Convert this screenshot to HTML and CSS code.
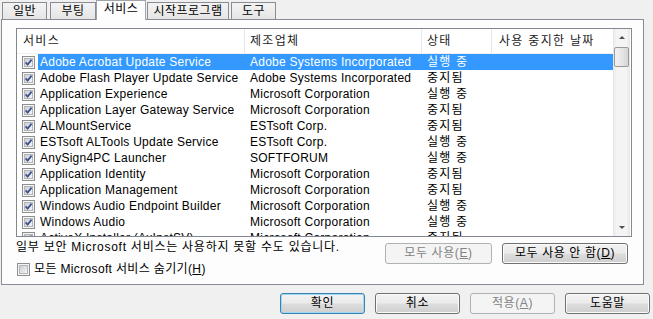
FILE: index.html
```html
<!DOCTYPE html>
<html lang="ko">
<head>
    <meta charset="UTF-8">
    <title>시스템 구성</title>
    <link rel="stylesheet" href="styles.css">
</head>
<body>
    <div class="tabs">
        <div class="tab t1">일반</div>
        <div class="tab t2">부팅</div>
        <div class="tab active">서비스</div>
        <div class="tab t4">시작프로그램</div>
        <div class="tab t5">도구</div>
    </div>

    <div class="panel">
        <div class="list">
            <div class="table">
                <div class="head">
                    <div class="hc c-name">서비스</div>
                    <div class="hc c-maker">제조업체</div>
                    <div class="hc c-state">상태</div>
                    <div class="hc c-date">사용 중지한 날짜</div>
                </div>
                <div class="row selected"><span class="cb on"></span><span class="cell name">Adobe Acrobat Update Service</span><span class="cell">Adobe Systems Incorporated</span><span class="cell state">실행 중</span><span class="cell"></span></div>
                <div class="row"><span class="cb on"></span><span class="cell name">Adobe Flash Player Update Service</span><span class="cell">Adobe Systems Incorporated</span><span class="cell state">중지됨</span><span class="cell"></span></div>
                <div class="row"><span class="cb on"></span><span class="cell name">Application Experience</span><span class="cell">Microsoft Corporation</span><span class="cell state">실행 중</span><span class="cell"></span></div>
                <div class="row"><span class="cb on"></span><span class="cell name">Application Layer Gateway Service</span><span class="cell">Microsoft Corporation</span><span class="cell state">중지됨</span><span class="cell"></span></div>
                <div class="row"><span class="cb on"></span><span class="cell name">ALMountService</span><span class="cell">ESTsoft Corp.</span><span class="cell state">중지됨</span><span class="cell"></span></div>
                <div class="row"><span class="cb on"></span><span class="cell name">ESTsoft ALTools Update Service</span><span class="cell">ESTsoft Corp.</span><span class="cell state">실행 중</span><span class="cell"></span></div>
                <div class="row"><span class="cb on"></span><span class="cell name">AnySign4PC Launcher</span><span class="cell">SOFTFORUM</span><span class="cell state">실행 중</span><span class="cell"></span></div>
                <div class="row"><span class="cb on"></span><span class="cell name">Application Identity</span><span class="cell">Microsoft Corporation</span><span class="cell state">중지됨</span><span class="cell"></span></div>
                <div class="row"><span class="cb on"></span><span class="cell name">Application Management</span><span class="cell">Microsoft Corporation</span><span class="cell state">중지됨</span><span class="cell"></span></div>
                <div class="row"><span class="cb on"></span><span class="cell name">Windows Audio Endpoint Builder</span><span class="cell">Microsoft Corporation</span><span class="cell state">실행 중</span><span class="cell"></span></div>
                <div class="row"><span class="cb on"></span><span class="cell name">Windows Audio</span><span class="cell">Microsoft Corporation</span><span class="cell state">실행 중</span><span class="cell"></span></div>
                <div class="row"><span class="cb on"></span><span class="cell name">ActiveX Installer (AxInstSV)</span><span class="cell">Microsoft Corporation</span><span class="cell state">중지됨</span><span class="cell"></span></div>
            </div>
            <div class="scrollbar">
                <div class="arrow up"></div>
                <div class="thumb"></div>
                <div class="track"></div>
                <div class="arrow down"></div>
            </div>
        </div>

        <div class="options">
            <div class="left">
                <div class="note">일부 보안 Microsoft 서비스는 사용하지 못할 수도 있습니다.</div>
                <div class="hide"><span class="cb"></span><span class="label">모든 Microsoft 서비스 숨기기(<u>H</u>)</span></div>
            </div>
            <div class="buttons">
                <button class="btn wide disabled">모두 사용(<u>E</u>)</button>
                <button class="btn wider">모두 사용 안 함(<u>D</u>)</button>
            </div>
        </div>
    </div>

    <div class="footer">
        <button class="btn default">확인</button>
        <button class="btn">취소</button>
        <button class="btn disabled">적용(<u>A</u>)</button>
        <button class="btn">도움말</button>
    </div>
</body>
</html>
```

FILE: styles.css
```css
body {
    margin: 0;
    width: 653px;
    height: 319px;
    overflow: hidden;
    background-color: #f0f0f0;
    font-family: 'Liberation Sans', 'Noto Sans CJK KR', sans-serif;
    font-size: 12px;
    color: #000;
}
.tabs {
    display: flex;
    align-items: flex-end;
    height: 19px;
    padding-left: 2px;
}
.tab {
    height: 16px;
    line-height: 16px;
    border: 1px solid #898c95;
    border-bottom: none;
    background: linear-gradient(#f3f3f3, #e5e5e5);
    text-align: center;
    letter-spacing: 0.5px;
}
.t1 { width: 43px; margin-right: 3px; }
.t2 { width: 44px; }
.tab.active {
    position: relative;
    z-index: 1;
    width: 48px;
    height: 19px;
    line-height: 17px;
    margin: 0 1px -1px 0;
    background: #fdfdfd;
    border-color: #a0a3aa;
}
.t4 { width: 80px; margin-right: 2px; }
.t5 { width: 43px; }

.panel {
    width: 627px;
    height: 256px;
    margin-left: 1px;
    padding: 8px 0 0 14px;
    border: 1px solid #898c95;
    background-color: #fdfdfd;
}
.list {
    display: flex;
    width: 614px;
    height: 207px;
    border: 1px solid #828790;
    background-color: #fff;
}
.table {
    width: 596px;
    height: 207px;
    overflow: hidden;
}
.head {
    display: grid;
    grid-template-columns: 228px 177px 70px 121px;
    height: 24px;
    border-bottom: 1px solid #eef0f3;
}
.hc {
    line-height: 24px;
    padding-left: 5px;
    border-right: 1px solid #e3e6ea;
    color: #1c1c1c;
    white-space: nowrap;
    letter-spacing: 1.3px;
}
.c-name { padding-left: 6px; }
.c-date { padding-left: 7px; border-right: none; }
.row {
    display: grid;
    grid-template-columns: 21px 207px 177px 70px 121px;
    height: 16px;
    line-height: 16px;
    letter-spacing: 0.25px;
    white-space: nowrap;
}
.row .cb {
    margin: 2px 0 0 5px;
}
.cell {
    padding-left: 5px;
    overflow: hidden;
}
.cell.name {
    padding-left: 2px;
}
.cell.state {
    letter-spacing: 1.2px;
}
.row.selected .cell {
    background-color: #3399ff;
    color: #fff;
}
.cb {
    display: inline-block;
    flex: none;
    width: 13px;
    height: 13px;
    background-image: url("data:image/svg+xml,%3Csvg xmlns='http://www.w3.org/2000/svg' width='13' height='13'%3E%3Cdefs%3E%3ClinearGradient id='g' x1='0' y1='0' x2='1' y2='1'%3E%3Cstop offset='0' stop-color='%23c9ccd2'/%3E%3Cstop offset='1' stop-color='%23f7f7f7'/%3E%3C/linearGradient%3E%3C/defs%3E%3Crect x='0.5' y='0.5' width='12' height='12' fill='%23f4f4f4' stroke='%238e8f8f'/%3E%3Crect x='2.5' y='2.5' width='8' height='8' fill='url(%23g)' stroke='%23b3b6bb'/%3E%3C/svg%3E");
}
.cb.on {
    background-image: url("data:image/svg+xml,%3Csvg xmlns='http://www.w3.org/2000/svg' width='13' height='13'%3E%3Cdefs%3E%3ClinearGradient id='g' x1='0' y1='0' x2='1' y2='1'%3E%3Cstop offset='0' stop-color='%23c9ccd2'/%3E%3Cstop offset='1' stop-color='%23f7f7f7'/%3E%3C/linearGradient%3E%3C/defs%3E%3Crect x='0.5' y='0.5' width='12' height='12' fill='%23f4f4f4' stroke='%238e8f8f'/%3E%3Crect x='2.5' y='2.5' width='8' height='8' fill='url(%23g)' stroke='%23b3b6bb'/%3E%3Cpath d='M3.6 6.4 L5.6 8.6 L9.6 3.6' stroke='%233e5395' stroke-width='1.8' fill='none'/%3E%3C/svg%3E");
}
.scrollbar {
    display: flex;
    flex-direction: column;
    width: 17px;
    background: linear-gradient(90deg, #e6e6e6, #f4f4f4 20%, #f4f4f4 80%, #e6e6e6);
}
.arrow {
    height: 17px;
    display: flex;
    align-items: center;
    justify-content: center;
}
.arrow::after {
    content: '';
    border-left: 3px solid transparent;
    border-right: 3px solid transparent;
}
.arrow.up::after { border-bottom: 3px solid #4d4d4d; }
.arrow.down::after { border-top: 3px solid #4d4d4d; }
.thumb {
    height: 18px;
    margin: 1px 1px 0;
    border: 1px solid #999;
    border-radius: 2px;
    background: linear-gradient(90deg, #f2f2f2, #e6e6e6 50%, #d6d6d6);
}
.track {
    flex: 1;
}

.options {
    display: flex;
    justify-content: space-between;
    width: 612px;
    margin-top: 2px;
}
.note {
    line-height: 16px;
    letter-spacing: 0.75px;
}
.hide {
    display: flex;
    align-items: center;
    gap: 4px;
    margin: 6px 0 0 1px;
    line-height: 16px;
}
.hide .label {
    letter-spacing: 0.35px;
}
.buttons {
    display: flex;
    gap: 10px;
    margin-top: 4px;
}
.btn {
    height: 21px;
    width: 85px;
    padding: 0;
    border: 1px solid #707070;
    border-radius: 3px;
    background: linear-gradient(#f2f2f2 0%, #ebebeb 48%, #dddddd 52%, #cfcfcf 100%);
    box-shadow: inset 0 0 0 1px #fbfbfb;
    font-family: 'Liberation Sans', 'Noto Sans CJK KR', sans-serif;
    font-size: 12px;
    line-height: 19px;
    letter-spacing: 0.6px;
    color: #000;
}
.btn.wide { width: 107px; }
.btn.wider { width: 126px; }
.btn.disabled {
    border-color: #adb2b5;
    background: #f4f4f4;
    box-shadow: none;
    color: #838383;
}
.btn.default {
    border-color: #3c7fb1;
    box-shadow: inset 0 0 0 1px #9ed8f2;
}
.footer {
    display: flex;
    justify-content: flex-end;
    gap: 10px;
    margin-top: 8px;
    padding-right: 3px;
}
```
